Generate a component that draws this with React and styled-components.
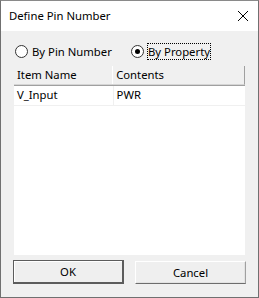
import React, { useState } from 'react'
import styled, { createGlobalStyle } from 'styled-components'

const GlobalStyle = createGlobalStyle`
  html, body { margin: 0; padding: 0; background: #ffffff; }
  body { font-family: "Noto Sans", "Liberation Sans", sans-serif; font-size: 11.3px; color: #000; }
`

const Window = styled.div`
  width: 259px;
  height: 298px;
  box-sizing: border-box;
  border: 1px solid #707070;
  border-top-color: #8a8a8a;
  display: flex;
  flex-direction: column;
  background: #f0f0f0;
`

const TitleBar = styled.div`
  height: 30px;
  background: #ffffff;
  display: flex;
  align-items: center;
  justify-content: space-between;
  padding: 0 9px 0 8px;
  flex-shrink: 0;
`

const Title = styled.span`
  padding-bottom: 1px;
`

const CloseIcon = styled.svg`
  width: 12px;
  height: 12px;
`

const Body = styled.div`
  flex: 1;
  display: flex;
  flex-direction: column;
  padding: 12px 12px 13px 12px;
`

const RadioRow = styled.div`
  display: flex;
  align-items: center;
  height: 17px;
  padding-left: 2px;
  margin-bottom: 6px;
`

const RadioLabel = styled.label`
  display: flex;
  align-items: center;
  width: ${p => p.width}px;
  cursor: default;
`

const Circle = styled.span`
  width: 11px;
  height: 11px;
  border-radius: 50%;
  border: 1px solid #333;
  background: #fff;
  display: flex;
  align-items: center;
  justify-content: center;
  margin-right: 3px;
  flex-shrink: 0;
`

const Dot = styled.span`
  width: 5px;
  height: 5px;
  border-radius: 50%;
  background: #000;
`

const LabelText = styled.span`
  padding: 0;
  border: 1px dotted ${p => (p.focused ? '#000' : 'transparent')};
  line-height: 15px;
`

const List = styled.div`
  flex: 1;
  background: #ffffff;
  border-left: 1px solid #f0f0f0;
  display: flex;
  flex-direction: column;
  margin-right: 1px;
`

const HeaderRow = styled.div`
  display: flex;
  height: 18px;
  background: #f0f0f0;
  border-bottom: 1px solid #d5d5d5;
  border-right: 1px solid #a0a0a0;
  box-shadow: 0 1px 0 #a0a0a0;
`

const HeaderCell = styled.div`
  width: ${p => p.width}px;
  padding-left: 3px;
  line-height: 18px;
  border-right: ${p => (p.last ? 'none' : '1px solid #ffffff')};
  box-sizing: border-box;
`

const Row = styled.div`
  display: flex;
  height: 19px;
  margin-top: 1px;
  border-bottom: 1px solid #f0f0f0;
`

const Cell = styled.div`
  width: ${p => p.width}px;
  padding-left: 3px;
  line-height: 18px;
  box-sizing: border-box;
  border-right: ${p => (p.last ? 'none' : '1px solid #f0f0f0')};
`

const ButtonRow = styled.div`
  display: flex;
  justify-content: space-between;
  align-items: center;
  margin-top: 5px;
`

const Button = styled.button`
  width: 111px;
  height: ${p => (p.primary ? 24 : 23)}px;
  font-family: "Noto Sans", "Liberation Sans", sans-serif;
  font-size: 11.3px;
  color: #000;
  background: #efefef;
  padding: 0;
  ${p =>
    p.primary
      ? `border: 1px solid #5c5c5c;
         border-right-width: 2px;
         border-bottom-width: 2px;
         box-shadow: inset 1px 1px 0 #ffffff;`
      : `border: 1px solid #ffffff;
         border-right-color: #a0a0a0;
         border-bottom-color: #6d6d6d;
         box-shadow: inset -1px -1px 0 #e3e3e3;`}
`

const columns = [
  { name: 'Item Name', width: 100 },
  { name: 'Contents', width: 132 },
]

const rows = [{ item: 'V_Input', contents: 'PWR' }]

export default function App() {
  const [mode, setMode] = useState('property')
  return (
    <>
      <GlobalStyle />
      <Window>
        <TitleBar>
          <Title>Define Pin Number</Title>
          <CloseIcon viewBox="0 0 12 12">
            <path d="M1 1 L11 11 M11 1 L1 11" stroke="#000" strokeWidth="1" fill="none" />
          </CloseIcon>
        </TitleBar>
        <Body>
          <RadioRow>
            <RadioLabel width={116} onClick={() => setMode('pin')}>
              <Circle>{mode === 'pin' && <Dot />}</Circle>
              <LabelText focused={mode === 'pin'}>By Pin Number</LabelText>
            </RadioLabel>
            <RadioLabel width={100} onClick={() => setMode('property')}>
              <Circle>{mode === 'property' && <Dot />}</Circle>
              <LabelText focused={mode === 'property'}>By Property</LabelText>
            </RadioLabel>
          </RadioRow>
          <List>
            <HeaderRow>
              {columns.map((c, i) => (
                <HeaderCell key={c.name} width={c.width} last={i === columns.length - 1}>
                  {c.name}
                </HeaderCell>
              ))}
            </HeaderRow>
            {rows.map(r => (
              <Row key={r.item}>
                <Cell width={100}>{r.item}</Cell>
                <Cell width={132} last>{r.contents}</Cell>
              </Row>
            ))}
          </List>
          <ButtonRow>
            <Button primary>OK</Button>
            <Button>Cancel</Button>
          </ButtonRow>
        </Body>
      </Window>
    </>
  )
}
